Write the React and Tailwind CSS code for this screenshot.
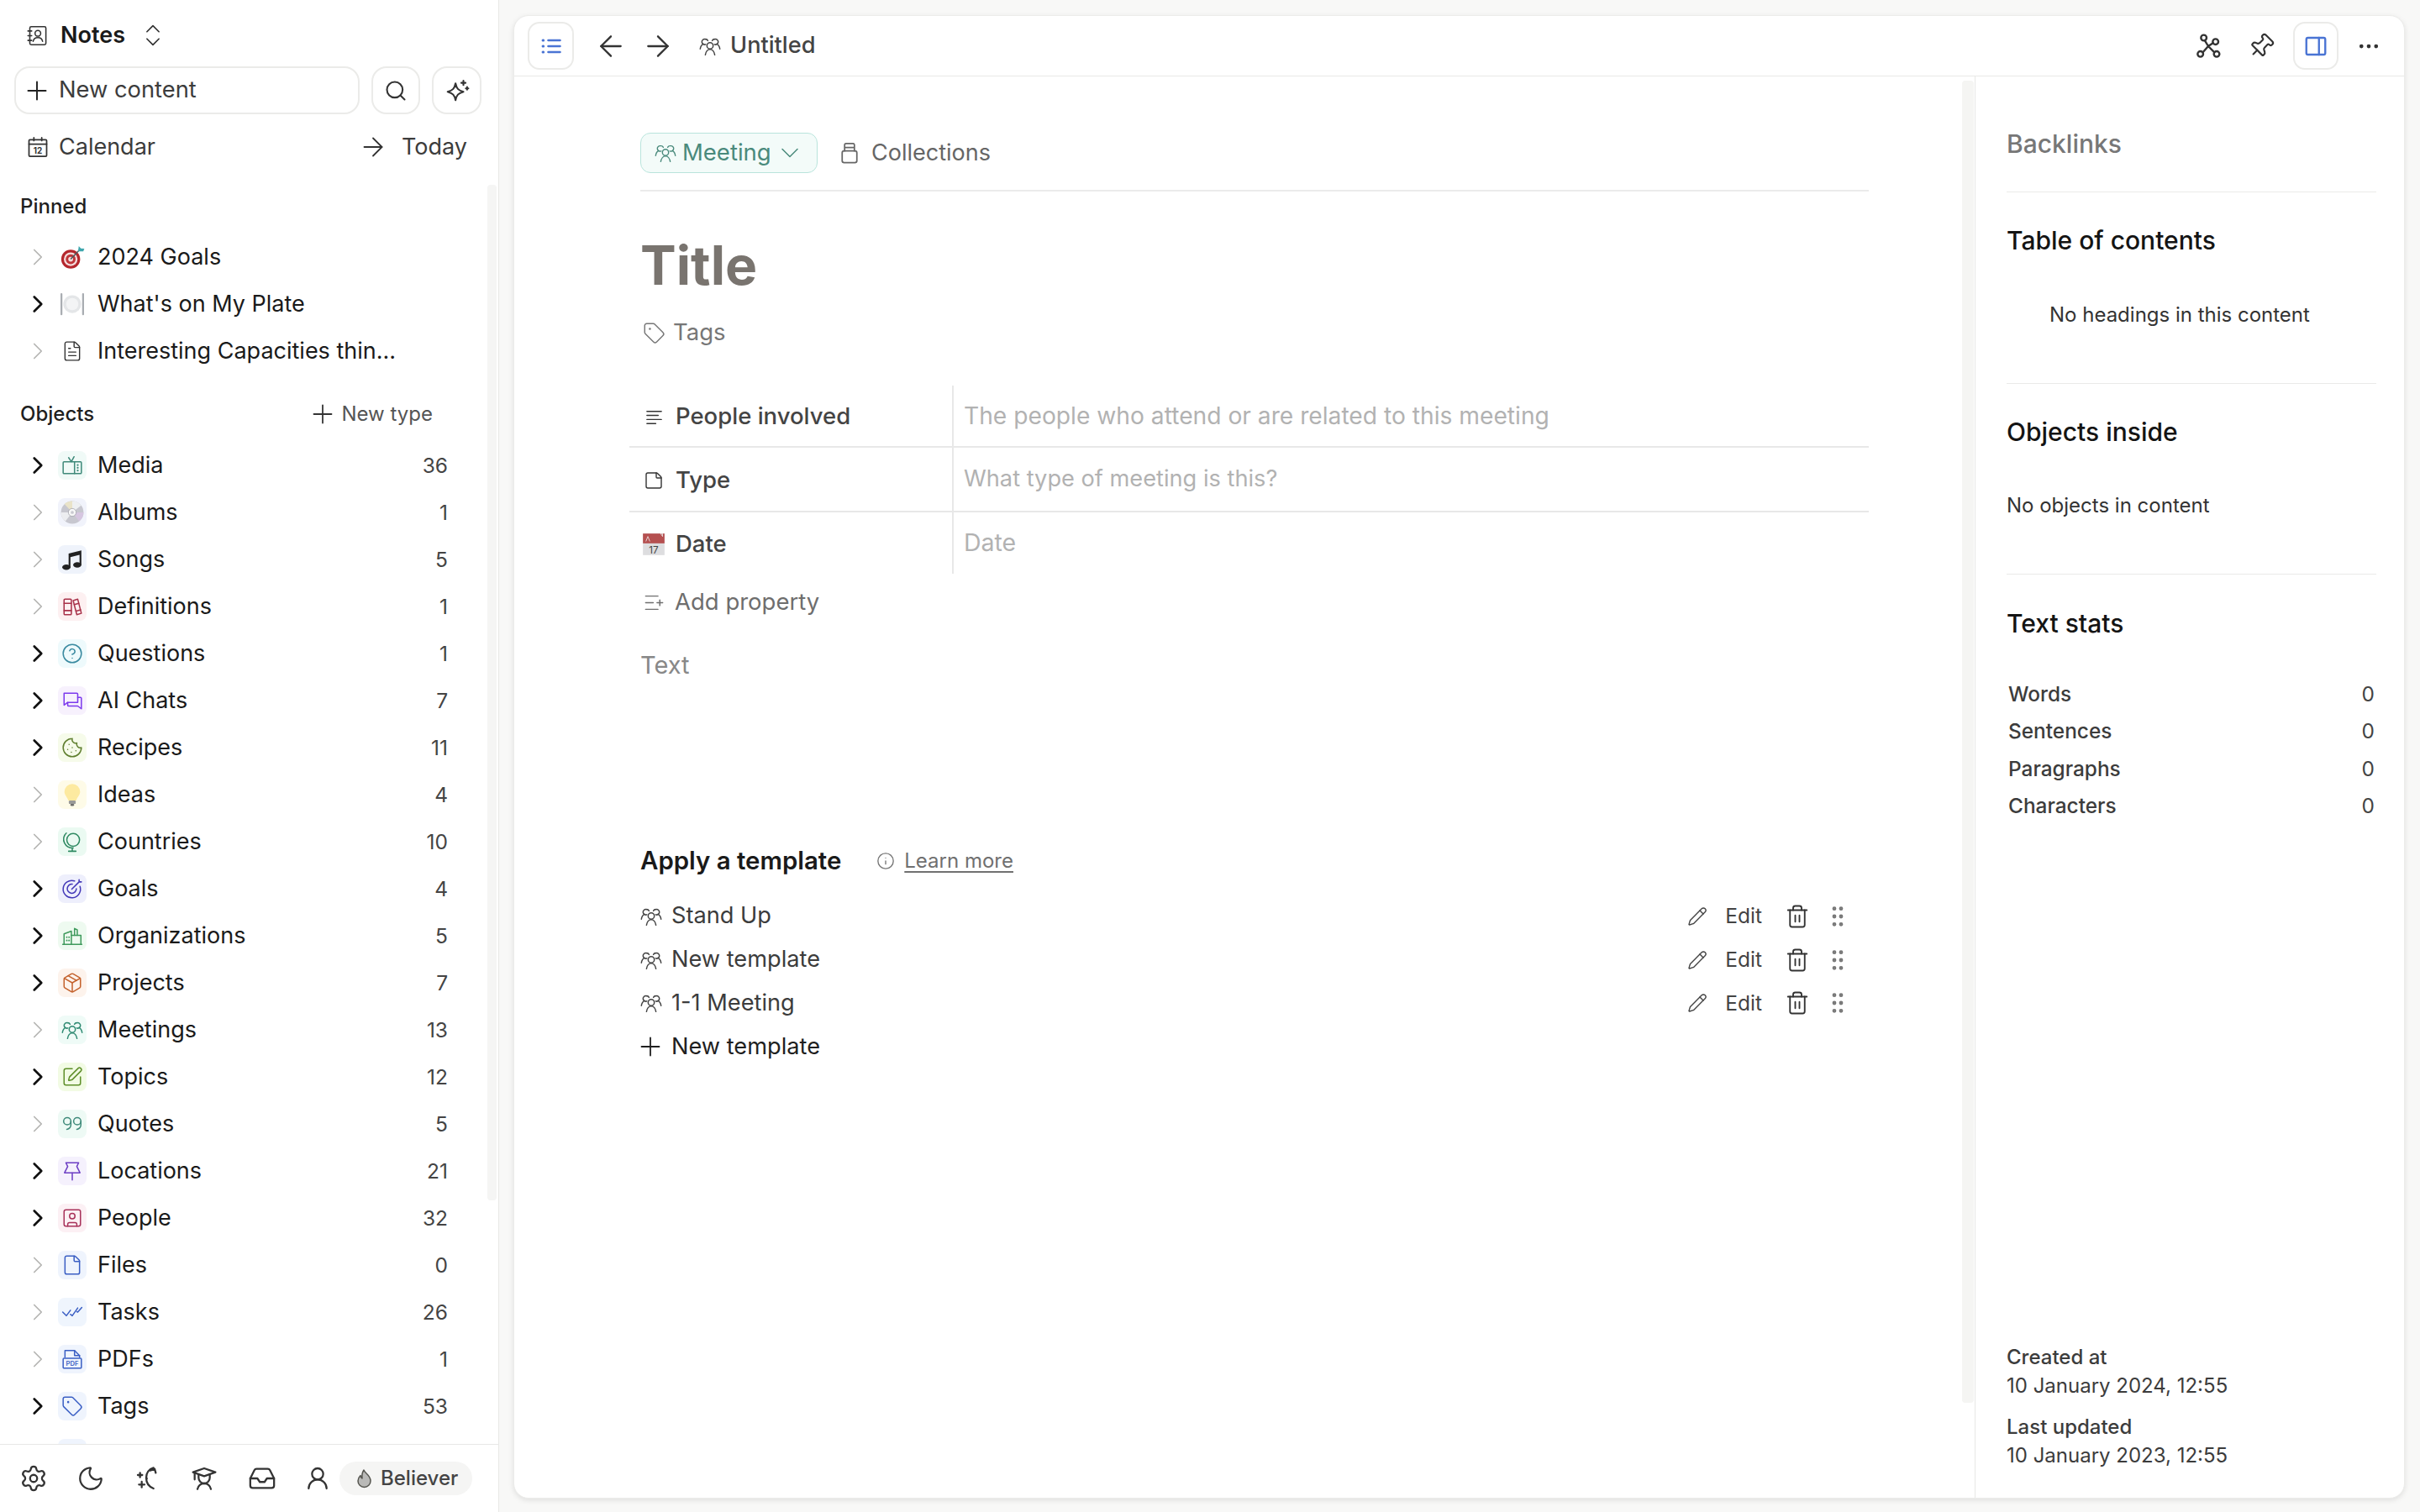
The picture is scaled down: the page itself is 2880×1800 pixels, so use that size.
import React from "react";
import {
  ArrowLeft,
  ArrowRight,
  CircleHelp,
  ChevronDown,
  ChevronRight,
  ChevronsUpDown,
  Cookie,
  Ellipsis,
  File,
  FileText,
  GripVertical,
  Inbox,
  Info,
  ListPlus,
  Moon,
  Package,
  Pencil,
  Pin,
  Plus,
  Search,
  Settings,
  SquarePen,
  SquareUser,
  StickyNote,
  Tag,
  Trash2,
  UserRound,
} from "lucide-react";

const Ic = ({ size = 24, sw = 1.6, className = "", children }) => (
  <svg
    width={size}
    height={size}
    viewBox="0 0 24 24"
    fill="none"
    stroke="currentColor"
    strokeWidth={sw}
    strokeLinecap="round"
    strokeLinejoin="round"
    className={`shrink-0 ${className}`}
  >
    {children}
  </svg>
);

const People = (props) => (
  <Ic {...props}>
    <circle cx="12" cy="11.5" r="3.4" />
    <path d="M6.8 21.5c.5-3 2.5-6 5.2-6s4.7 3 5.2 6" />
    <path d="M7.2 10a3 3 0 1 1-.6-5.7 3 3 0 0 1 3 1.6" />
    <path d="M4.6 9.6C2.8 10.4 1.6 12 1.2 15" />
    <path d="M16.8 10a3 3 0 1 0 .6-5.7 3 3 0 0 0-3 1.6" />
    <path d="M19.4 9.6c1.8.8 3 2.4 3.4 5.4" />
  </Ic>
);

const TvRadio = (props) => (
  <Ic {...props}>
    <rect x="2" y="8" width="20" height="13" rx="1" />
    <path d="M14.5 8v13M8 3.5 11 8l3-5.5" />
    <path d="M18 11.5v.2M18 14.5v.2M18 17.5v.2" strokeWidth="2" />
  </Ic>
);

const Books = (props) => (
  <Ic {...props}>
    <rect x="3" y="4" width="8" height="17" rx="1" />
    <path d="M3 8.5h8M3 16.5h8" />
    <path d="m13 5.5 5-1.5 4 15.5-5 1.5z" />
    <path d="m14.2 10 5-1.4M16.2 17l5-1.4" />
  </Ic>
);

const Chats = (props) => (
  <Ic {...props}>
    <path d="M3 4h14a1 1 0 0 1 1 1v9H7l-4 3z" />
    <path d="M7 14v3a1 1 0 0 0 1 1h10l4 3V9.5a1 1 0 0 0-1-1h-3" />
  </Ic>
);

const Globe = (props) => (
  <Ic {...props}>
    <circle cx="13" cy="10" r="7" />
    <path d="M5.5 2.5C2.5 5 1.5 9.5 3.5 13.5c1.700 3.500 5.500 5.500 9.500 5.500" />
    <path d="M12 19v3M8 22.500h8" />
  </Ic>
);

const Goal = (props) => (
  <Ic {...props}>
    <path d="M20.500 9.500a9.500 9.500 0 1 1-6-6" />
    <path d="M16.500 12a5 5 0 1 1-4.500-5" />
    <path d="m11.500 12.500 8-8M19.500 4.500V2M19.500 4.500H22" />
  </Ic>
);

const Building = (props) => (
  <Ic {...props}>
    <path d="M1.500 21.500h21" />
    <path d="M3 21.500V10l8-3v14.500" />
    <path d="M11 11.500h10.500v10" />
    <path d="M14.500 11.500V4l3 1.500v6" />
    <path d="M6 13.500v.2M8.500 13.500v.2M6 17v.2M8.500 17v.2" strokeWidth="1.800" />
  </Ic>
);

const Quotes = (props) => (
  <Ic {...props}>
    <circle cx="6.500" cy="9" r="4" />
    <path d="M10.500 9v3.500c0 3-1.500 5-4.500 5.500" />
    <circle cx="17.500" cy="9" r="4" />
    <path d="M21.500 9v3.500c0 3-1.500 5-4.500 5.500" />
  </Ic>
);

const Ticks = (props) => (
  <Ic {...props}>
    <path d="m1.500 12 4 4 4.500-6" />
    <path d="m10 14.500 2 1.500 6-8.500" />
    <path d="M17 11.500l1 .5 4.500-5" />
  </Ic>
);

const Pdf = (props) => (
  <Ic {...props}>
    <path d="M4 10V2.500h10.500L20 8v2" />
    <path d="M14.500 2.500V8H20" />
    <rect x="2" y="11" width="20" height="11" rx="1" />
    <text x="12" y="19.500" textAnchor="middle" fontSize="7" fontWeight="600" fill="currentColor" stroke="none">
      PDF
    </text>
  </Ic>
);

const PushPin = (props) => (
  <Ic {...props}>
    <path d="M5 3h14l-2 4 3.500 7h-17L7 7z" />
    <path d="M12 14v8" />
  </Ic>
);

const NotesBook = (props) => (
  <Ic {...props}>
    <rect x="4" y="2.500" width="17" height="19" rx="1.500" />
    <path d="M2 7h4M2 12h4M2 17h4" />
    <circle cx="12.500" cy="9.500" r="3" />
    <path d="M7.500 18c.4-2.500 2.400-4 5-4s4.600 1.500 5 4" />
  </Ic>
);

const CalendarDay = (props) => (
  <Ic {...props}>
    <rect x="3" y="4.500" width="18" height="17" rx="1" />
    <path d="M3 9h18M8 2.500v3M16 2.500v3" />
    <text x="12" y="18.500" textAnchor="middle" fontSize="8.500" fontWeight="700" fill="currentColor" stroke="none">
      12
    </text>
  </Ic>
);

const Sparkle = (props) => (
  <Ic {...props}>
    <path d="M10.500 5c1 5 2.500 6.500 7.500 8-5 1.500-6.500 3-7.500 8-1-5-2.500-6.500-7.500-8 5-1.500 6.500-3 7.500-8z" />
    <path d="M18 2.500v4M16 4.500h4M21.500 8.500v2.500M20.300 9.800h2.400" />
  </Ic>
);

const MoonStars = (props) => (
  <Ic {...props}>
    <path d="M17 2.500c-4 1-6.500 4.500-6.500 9s2.500 8 6.500 9.500" />
    <path d="m14 5 4-1.500L19 7" />
    <path d="M5 7v4M3 9h4M6.500 15v5M4 17.500h5M11 12v.2" />
  </Ic>
);

const Scholar = (props) => (
  <Ic {...props}>
    <path d="M2 6.500 12 3l10 3.500-10 3.500z" />
    <path d="M3.500 7v6" />
    <path d="M7 9v2.500a5 5 0 0 0 10 0V9" />
    <path d="M6 21.500c.6-2.800 3-5 6-5s5.400 2.200 6 5" />
  </Ic>
);

const GraphNodes = (props) => (
  <Ic {...props}>
    <circle cx="8" cy="4.500" r="2.500" />
    <circle cx="18.500" cy="8" r="2.500" />
    <circle cx="5" cy="19" r="2.500" />
    <circle cx="19.500" cy="19" r="2.500" />
    <path d="m9 7 3 5M16.200 9.200 12 12M7.200 17.500 12 12M17.500 17.500 12 12" />
  </Ic>
);

const Jar = (props) => (
  <Ic {...props}>
    <rect x="4.500" y="10" width="15" height="12" rx="2" />
    <path d="M7 10V4a1.500 1.500 0 0 1 1.500-1.500h7A1.500 1.500 0 0 1 17 4v6M7 6.500h10" />
  </Ic>
);

const SideList = (props) => (
  <Ic {...props}>
    <path d="M9 6h12M9 12h12M9 18h12" strokeWidth="2.200" />
    <path d="M3.500 6h.5M3.500 12h.5M3.500 18h.5" strokeWidth="2.600" />
  </Ic>
);

const SidePanel = (props) => (
  <Ic {...props}>
    <rect x="3" y="4" width="18" height="16" rx="1.500" />
    <path d="M15 4v16" />
  </Ic>
);

const LinesLeft = (props) => (
  <Ic {...props}>
    <path d="M3 5h18M3 10h14M3 15h18M3 20h11" />
  </Ic>
);

const DartTarget = () => (
  <svg width="30" height="30" viewBox="0 0 24 24" className="shrink-0">
    <circle cx="10.500" cy="14" r="9" fill="#b4262c" />
    <circle cx="10.500" cy="14" r="6.500" fill="#f3dcdc" />
    <circle cx="10.500" cy="14" r="4.700" fill="#c0363a" />
    <circle cx="10.500" cy="14" r="2.300" fill="#f3dcdc" />
    <path d="M10.500 14 20 4" stroke="#4a5a5e" strokeWidth="1.200" />
    <path d="m17.500 6.500.7-5 2 2.300 3.300.2-1 2.500z" fill="#3fa6ad" />
  </svg>
);

const PlateEmoji = () => (
  <svg width="30" height="30" viewBox="0 0 24 24" className="shrink-0">
    <rect x="0.800" y="1.500" width="1.800" height="21" rx="0.800" fill="#a9adb2" />
    <rect x="21.400" y="1.500" width="1.800" height="21" rx="0.800" fill="#a9adb2" />
    <circle cx="12" cy="12" r="8.500" fill="#e4e6e8" />
    <circle cx="12" cy="12" r="5.800" fill="#f3f4f5" />
  </svg>
);

const DiscEmoji = () => (
  <svg width="28" height="28" viewBox="0 0 24 24" className="shrink-0">
    <circle cx="12" cy="12" r="11.500" fill="#c7c7cf" />
    <path d="M12 12 4 3.500A11.500 11.500 0 0 1 12 .5z" fill="#e9e3c9" />
    <path d="M12 12 23.500 12A11.500 11.500 0 0 1 19 21z" fill="#d6c6e0" />
    <path d="M12 12 .5 12A11.500 11.500 0 0 0 5 21z" fill="#ecedf0" />
    <path d="M12 12 12 .5A11.500 11.500 0 0 1 21 5z" fill="#eef0f2" />
    <circle cx="12" cy="12" r="4" fill="#f7f7f7" stroke="#9b9ba3" strokeWidth="0.600" />
    <circle cx="12" cy="12" r="1.600" fill="#c9c9d0" />
  </svg>
);

const NoteEmoji = () => (
  <svg width="26" height="26" viewBox="0 0 24 24" className="shrink-0">
    <path d="M8 5.500 22 2v16h-2V7L10 9.500V21H8z" fill="#222" />
    <ellipse cx="5.500" cy="20.500" rx="4.500" ry="3" fill="#222" />
    <ellipse cx="17.500" cy="18" rx="4.500" ry="3" fill="#222" />
  </svg>
);

const BulbEmoji = () => (
  <svg width="28" height="30" viewBox="0 0 24 24" className="shrink-0">
    <path d="M12 1a8 8 0 0 0-8 8c0 3.500 3 5.500 4 9h8c1-3.500 4-5.500 4-9a8 8 0 0 0-8-8z" fill="#fdeaa0" />
    <rect x="8.500" y="18" width="7" height="3.500" rx="1" fill="#9a9a98" />
    <rect x="10" y="21.500" width="4" height="2" rx="1" fill="#6f6f6d" />
  </svg>
);

const CalendarEmoji = () => (
  <svg width="28" height="30" viewBox="0 0 24 24" className="shrink-0">
    <rect x="1" y="1" width="22" height="22" fill="#dddddf" />
    <path d="M1 1h22v10H1z" fill="#b55050" />
    <path d="m4 9 2-5 2 5M19 1l2 3V1z" stroke="#eee" strokeWidth="0.700" fill="none" />
    <text x="12" y="21" textAnchor="middle" fontSize="10" fill="#444">
      17
    </text>
  </svg>
);

const Flame = () => (
  <svg width="24" height="24" viewBox="0 0 24 24" className="shrink-0">
    <path
      d="M11 2c1 4 8 6 8 13a7.500 7.500 0 0 1-15 0c0-3 1.500-5 3-6.500.2 2 1 3 2 3.500C8.500 8.500 9 5 11 2z"
      fill="#b9b9b7"
      stroke="#55554f"
      strokeWidth="1.500"
      strokeLinejoin="round"
    />
  </svg>
);

const objects = [
  { name: "Media", count: 36, open: true, tile: "bg-[#f0faf7] text-[#3f8a7a]", Icon: TvRadio },
  { name: "Albums", count: 1, open: false, tile: "bg-[#f1f3fb]", emoji: <DiscEmoji /> },
  { name: "Songs", count: 5, open: false, tile: "bg-[#eff3fb]", emoji: <NoteEmoji /> },
  { name: "Definitions", count: 1, open: false, tile: "bg-[#fdf0f1] text-[#a8324a]", Icon: Books },
  { name: "Questions", count: 1, open: true, tile: "bg-[#eefafc] text-[#3a8aa0]", Icon: CircleHelp },
  { name: "AI Chats", count: 7, open: true, tile: "bg-[#f7f1fd] text-[#7c3aed]", Icon: Chats },
  { name: "Recipes", count: 11, open: true, tile: "bg-[#f6fbea] text-[#5f7f2f]", Icon: Cookie },
  { name: "Ideas", count: 4, open: false, tile: "bg-[#fefbe8]", emoji: <BulbEmoji /> },
  { name: "Countries", count: 10, open: false, tile: "bg-[#ebfaf2] text-[#2f8a62]", Icon: Globe },
  { name: "Goals", count: 4, open: true, tile: "bg-[#eeeffc] text-[#4338b8]", Icon: Goal },
  { name: "Organizations", count: 5, open: true, tile: "bg-[#eefaf0] text-[#3f9a5c]", Icon: Building },
  { name: "Projects", count: 7, open: true, tile: "bg-[#fdf3ec] text-[#c4622d]", Icon: Package },
  { name: "Meetings", count: 13, open: false, tile: "bg-[#effbf7] text-[#2f8a72]", Icon: People },
  { name: "Topics", count: 12, open: true, tile: "bg-[#f2fbe4] text-[#5f8f2a]", Icon: SquarePen },
  { name: "Quotes", count: 5, open: false, tile: "bg-[#eefaf5] text-[#3f8a7a]", Icon: Quotes },
  { name: "Locations", count: 21, open: true, tile: "bg-[#f5f1fd] text-[#6d3fc4]", Icon: PushPin },
  { name: "People", count: 32, open: true, tile: "bg-[#fcf0f4] text-[#a8325a]", Icon: SquareUser },
  { name: "Files", count: 0, open: false, tile: "bg-[#eff4fd] text-[#3b5fc4]", Icon: File },
  { name: "Tasks", count: 26, open: false, tile: "bg-[#eff5fd] text-[#3b5fc4]", Icon: Ticks },
  { name: "PDFs", count: 1, open: false, tile: "bg-[#eff4fd] text-[#3b5fc4]", Icon: Pdf },
  { name: "Tags", count: 53, open: true, tile: "bg-[#eff4fd] text-[#3b5fc4]", Icon: Tag },
];

const Caret = ({ open }) => (
  <span className="flex w-[18px] justify-center">
    <ChevronRight
      size={34}
      strokeWidth={open ? 1.9 : 1.2}
      className={`shrink-0 ${open ? "text-[#111111]" : "text-[#b4b4b2]"}`}
    />
  </span>
);

const PinnedRow = ({ open, icon, label }) => (
  <div className="flex h-[56px] items-center pl-[36px]">
    <Caret open={open} />
    <span className="ml-[15px] flex w-[34px] justify-center">{icon}</span>
    <span className="ml-[13px] text-[27px] text-[#1a1a1a]">{label}</span>
  </div>
);

const ObjectRow = ({ item }) => {
  const { Icon } = item;
  return (
    <div className="flex h-[56px] items-center pl-[36px] pr-[60px]">
      <Caret open={item.open} />
      <span className={`ml-[15px] flex h-[34px] w-[34px] items-center justify-center rounded-[8px] ${item.tile}`}>
        {Icon ? <Icon size={26} strokeWidth={1.4} sw={1.4} /> : item.emoji}
      </span>
      <span className="ml-[13px] text-[27px] text-[#1a1a1a]">{item.name}</span>
      <span className="ml-auto text-[24.500px] text-[#444444]">{item.count}</span>
    </div>
  );
};

const Sidebar = () => (
  <aside className="relative flex h-full w-[594px] shrink-0 flex-col border-r border-[#e8e8e6] bg-white">
    <div className="min-h-0 flex-1 overflow-hidden">
      <div className="flex h-[79px] items-center pl-[31px] pt-[5px]">
        <NotesBook size={27} sw={1.4} className="text-[#333333]" />
        <span className="ml-[14px] text-[27px] font-semibold text-[#1a1a1a]">Notes</span>
        <ChevronsUpDown size={34} strokeWidth={1.2} className="ml-[16px] text-[#333333]" />
      </div>
      <div className="flex h-[57px] gap-[14px] px-[17px]">
        <button className="flex h-full w-[411px] items-center rounded-[18px] border-2 border-[#ebebe9] pl-[7px] text-[27.300px] text-[#3c3c3c]">
          <Plus size={36} strokeWidth={1.3} className="text-[#222222]" />
          <span className="ml-[8px]">New content</span>
        </button>
        <button className="flex h-full w-[58px] items-center justify-center rounded-[18px] border-2 border-[#ebebe9] text-[#333333]">
          <Search size={28} strokeWidth={1.8} />
        </button>
        <button className="flex h-full w-[59px] items-center justify-center rounded-[18px] border-2 border-[#ebebe9] text-[#333333]">
          <Sparkle size={30} sw={1.7} />
        </button>
      </div>
      <div className="flex h-[78px] items-center pl-[31px] pr-[37px] text-[27px] text-[#3c3c3c]">
        <CalendarDay size={28} sw={1.5} className="text-[#333333]" />
        <span className="ml-[11px]">Calendar</span>
        <ArrowRight size={36} strokeWidth={1.2} className="ml-auto text-[#333333]" />
        <span className="ml-[16px]">Today</span>
      </div>
      <div className="flex h-[64px] items-center pl-[24px] text-[24px] font-medium text-[#1f1f1f]">Pinned</div>
      <PinnedRow open={false} icon={<DartTarget />} label="2024 Goals" />
      <PinnedRow open icon={<PlateEmoji />} label="What's on My Plate" />
      <PinnedRow
        open={false}
        icon={<FileText size={26} strokeWidth={1.3} className="text-[#333333]" />}
        label="Interesting Capacities thin..."
      />
      <div className="flex h-[80px] items-center pl-[24px] pr-[78px] pt-[14px] text-[24px]">
        <span className="font-medium text-[#1f1f1f]">Objects</span>
        <Plus size={36} strokeWidth={1.2} className="ml-auto text-[#333333]" />
        <span className="ml-[4px] text-[#555555]">New type</span>
      </div>
      {objects.map((item) => (
        <ObjectRow key={item.name} item={item} />
      ))}
      <div className="flex h-[56px] items-center pl-[69px]">
        <span className="h-[34px] w-[34px] rounded-[8px] bg-[#eff4fd]" />
      </div>
    </div>
    <div className="flex h-[81px] shrink-0 items-center border-t border-[#e8e8e6] pl-[23px] text-[#333333]">
      <Settings size={34} strokeWidth={1.6} />
      <Moon size={34} strokeWidth={1.6} className="ml-[34px]" />
      <MoonStars size={32} sw={1.7} className="ml-[35px]" />
      <Scholar size={32} sw={1.7} className="ml-[35px]" />
      <Inbox size={34} strokeWidth={1.6} className="ml-[36px]" />
      <UserRound size={32} strokeWidth={1.7} className="ml-[33px]" />
      <span className="ml-[10px] flex h-[40px] w-[158px] items-center rounded-full bg-[#f5f5f4] pl-[18px] text-[24px] font-medium text-[#444444]">
        <Flame />
        <span className="ml-[7px]">Believer</span>
      </span>
    </div>
    <div className="absolute right-[2px] top-[220px] h-[1209px] w-[11px] rounded-[4px] bg-[#f5f5f4]" />
  </aside>
);

const PropRow = ({ icon, label, placeholder, height, size, last }) => (
  <div className={`flex ${height} ${last ? "" : "border-b-2 border-[#e8e8e8]"}`}>
    <div className="flex w-[386px] shrink-0 items-center border-r-2 border-[#e8e8e8] pl-[17px] pt-[2px]">
      <span className="flex w-[24px] justify-center">{icon}</span>
      <span className="ml-[14px] text-[27.500px] font-medium text-[#444444]">{label}</span>
    </div>
    <div className={`flex items-center pl-[12px] text-[#b2b2b2] ${size}`}>{placeholder}</div>
  </div>
);

const TemplateRow = ({ name }) => (
  <div className="flex h-[51.700px] items-center pr-[21px]">
    <People size={26} sw={1.4} className="text-[#444444]" />
    <span className="ml-[11px] text-[27.200px] text-[#3c3c3c]">{name}</span>
    <Pencil size={24} strokeWidth={1.4} className="ml-auto text-[#444444]" />
    <span className="ml-[21px] text-[24.500px] text-[#444444]">Edit</span>
    <Trash2 size={30} strokeWidth={1.5} className="ml-[27px] text-[#333333]" />
    <GripVertical size={32} strokeWidth={1.6} className="ml-[17px] text-[#777777]" />
  </div>
);

const Editor = () => (
  <div className="relative min-w-0 flex-1 pl-[150px] pt-[67px]">
    <div className="w-[1462px]">
      <div className="flex h-[48px] items-center">
        <button className="flex h-full w-[211px] items-center rounded-[12px] border border-[#b9e4dc] bg-[#f3fbf9] pl-[16px] text-[27.500px] text-[#4a8a7c]">
          <People size={26} sw={1.3} />
          <span className="ml-[7px]">Meeting</span>
          <ChevronDown size={36} strokeWidth={1} className="ml-[4px] shrink-0" />
        </button>
        <Jar size={28} sw={1.5} className="ml-[24px] text-[#666666]" />
        <span className="ml-[12px] text-[27px] text-[#666666]">Collections</span>
      </div>
      <div className="mt-[20px] border-t-2 border-[#ebebeb]" />
      <h1 className="mt-[48px] text-[64px] font-bold leading-[80px] text-[#79746f]">Title</h1>
      <div className="mt-[20px] flex h-[40px] items-center pl-[3px] text-[27.500px] text-[#777777]">
        <Tag size={27} strokeWidth={1.3} />
        <span className="ml-[9px]">Tags</span>
      </div>
      <div className="-ml-[13px] mt-[43px] w-[1475px]">
        <PropRow
          height="h-[74px]"
          size="text-[28.200px]"
          icon={<LinesLeft size={23} sw={1.5} className="text-[#333333]" />}
          label="People involved"
          placeholder="The people who attend or are related to this meeting"
        />
        <PropRow
          height="h-[77px]"
          size="text-[27.200px]"
          icon={<StickyNote size={26} strokeWidth={1.4} className="text-[#333333]" />}
          label="Type"
          placeholder="What type of meeting is this?"
        />
        <PropRow height="h-[73px]" size="text-[28.500px]" icon={<CalendarEmoji />} label="Date" placeholder="Date" last />
      </div>
      <div className="flex h-[68px] items-center pl-[3px] text-[27.500px] text-[#6e6e6e]">
        <ListPlus size={27} strokeWidth={1.3} />
        <span className="ml-[11px]">Add property</span>
      </div>
      <div className="mt-[11px] flex h-[60px] items-center text-[29px] text-[#888888]">Text</div>
      <div className="mt-[183px] flex h-[40px] items-center">
        <h2 className="text-[29.400px] font-semibold text-[#1a1a1a]">Apply a template</h2>
        <Info size={22} strokeWidth={1.5} className="ml-[42px] text-[#777777]" />
        <a className="ml-[11px] text-[24px] text-[#707070] underline underline-offset-4">Learn more</a>
      </div>
      <div className="mt-[20px]">
        <TemplateRow name="Stand Up" />
        <TemplateRow name="New template" />
        <TemplateRow name="1-1 Meeting" />
        <div className="flex h-[51.700px] items-center text-[27.200px] text-[#1f1f1f]">
          <Plus size={36} strokeWidth={1.2} className="-ml-[6px]" />
          <span className="ml-[7px]">New template</span>
        </div>
      </div>
    </div>
    <div className="absolute bottom-[113px] right-[1px] top-[5px] w-[14px] rounded-[4px] bg-[#f5f5f3]" />
  </div>
);

const Heading = ({ children, muted }) => (
  <h3 className={`text-[30px] font-medium leading-[40px] ${muted ? "text-[#777777]" : "text-[#141414]"}`}>
    {children}
  </h3>
);

const Stat = ({ label }) => (
  <div className="flex h-[44.500px] items-center justify-between px-[2px] text-[24.400px]">
    <span className="font-medium text-[#3c3c3c]">{label}</span>
    <span className="text-[#444444]">0</span>
  </div>
);

const RightPanel = () => (
  <div className="flex w-[511px] shrink-0 flex-col border-l border-[#e8e8e6] pl-[37px] pr-[33px]">
    <div className="h-[138px] border-b border-[#eaeae8] pt-[60px]">
      <Heading muted>Backlinks</Heading>
    </div>
    <div className="h-[228px] border-b border-[#eaeae8] pt-[37px]">
      <Heading>Table of contents</Heading>
      <p className="mt-[52px] pl-[51px] text-[24px] leading-[34px] text-[#333333]">No headings in this content</p>
    </div>
    <div className="h-[227px] border-b border-[#eaeae8] pt-[37px]">
      <Heading>Objects inside</Heading>
      <p className="mt-[51px] text-[24px] leading-[34px] text-[#333333]">No objects in content</p>
    </div>
    <div className="pt-[38px]">
      <Heading>Text stats</Heading>
      <div className="mt-[42px]">
        <Stat label="Words" />
        <Stat label="Sentences" />
        <Stat label="Paragraphs" />
        <Stat label="Characters" />
      </div>
    </div>
    <div className="mt-auto pb-[33px] text-[24px] leading-[34px] text-[#3c3c3c]">
      <p className="font-medium">Created at</p>
      <p>10 January 2024, 12:55</p>
      <p className="mt-[15px] font-medium">Last updated</p>
      <p>10 January 2023, 12:55</p>
    </div>
  </div>
);

const Toolbar = () => (
  <div className="flex h-[72px] shrink-0 items-center border-b border-[#e8e8e6] pl-[16px] pr-[27px]">
    <button className="flex h-[57px] w-[55px] items-center justify-center rounded-[14px] border-2 border-[#ebebe9] text-[#4a74d4]">
      <SideList size={28} />
    </button>
    <ArrowLeft size={40} strokeWidth={1.4} className="ml-[24px] text-[#333333]" />
    <ArrowRight size={40} strokeWidth={1.4} className="ml-[16px] text-[#333333]" />
    <People size={26} sw={1.4} className="ml-[29px] text-[#444444]" />
    <span className="ml-[11px] text-[27.200px] font-medium text-[#444444]">Untitled</span>
    <div className="ml-auto flex items-center">
      <GraphNodes size={32} sw={1.8} className="text-[#333333]" />
      <Pin size={32} strokeWidth={1.6} className="ml-[31px] rotate-[45deg] text-[#333333]" />
      <button className="ml-[22px] flex h-[57px] w-[54px] items-center justify-center rounded-[14px] border-2 border-[#ebebe9] text-[#4a74d4]">
        <SidePanel size={30} sw={1.9} />
      </button>
      <Ellipsis size={30} strokeWidth={1.8} className="ml-[21px] text-[#333333]" />
    </div>
  </div>
);

const App = () => (
  <div className="flex h-screen w-full overflow-hidden bg-[#f8f8f7] font-['Inter',sans-serif]">
    <Sidebar />
    <main className="min-w-0 flex-1 pb-[16px] pl-[17px] pr-[18px] pt-[18px]">
      <div className="flex h-full flex-col overflow-hidden rounded-[18px] border border-[#ececea] bg-white shadow-[0_2px_6px_rgba(0,0,0,0.1)]">
        <Toolbar />
        <div className="flex min-h-0 flex-1">
          <Editor />
          <RightPanel />
        </div>
      </div>
    </main>
  </div>
);

export default App;
